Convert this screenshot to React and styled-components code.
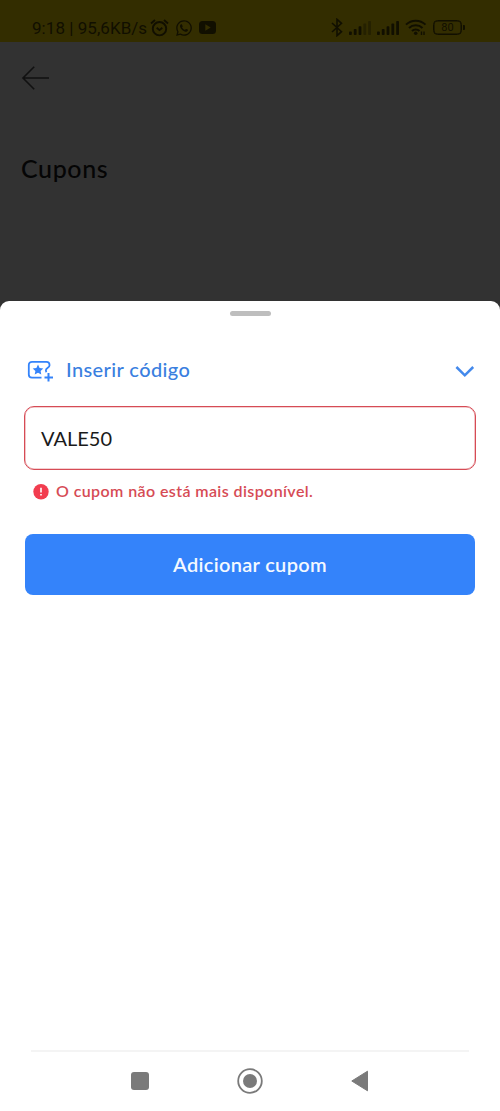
import React from "react";
import styled, { createGlobalStyle } from "styled-components";
import { FaWhatsapp } from "react-icons/fa";

const Colors = {
  statusBar: "#332d00",
  statusInk: "#110f00",
  backdrop:  "#323232",
  blue:      "#3483fa",
  link:      "#3a7fdf",
  red:       "#d64b55",
  alert:     "#f23d4f",
  nav:       "#7a7a7a",
};

const GlobalStyle = createGlobalStyle`
  * { box-sizing: border-box; }
  body {
    margin: 0;
    background: #fff;
    font-family: Lato, "Liberation Sans", sans-serif;
  }
`;

const Screen = styled.div`
  display:        flex;
  flex-direction: column;
  height:         1111px;
  background:     ${Colors.backdrop};
  overflow:       hidden;
`;

const StatusBar = styled.div`
  display:         flex;
  justify-content: space-between;
  height:          42px;
  padding:         13px 35px 0 32px;
  background:      ${Colors.statusBar};
  color:           ${Colors.statusInk};
`;

const StatusGroup = styled.div`
  display:     flex;
  align-items: center;
  height:      29px;
  gap:         ${props => props.$gap};
`;

const StatusText = styled.span`
  width:          112px;
  font-family:    Roboto, sans-serif;
  font-size:      17px;
  letter-spacing: 0.05px;
  white-space:    nowrap;
`;

const Header = styled.header`
  flex:    none;
  height:  259px;
  padding: 24px 21px 0;
  svg { display: block; }
`;

const Title = styled.h1`
  margin:         63px 0 0;
  font-size:      25px;
  line-height:    30px;
  font-weight:    500;
  letter-spacing: 0.6px;
  color:          #050505;
`;

const Sheet = styled.main`
  flex:           1;
  display:        flex;
  flex-direction: column;
  background:     #fff;
  border-radius:  9px 9px 0 0;
`;

const Handle = styled.div`
  width:         41px;
  height:        5px;
  margin:        10px auto 0;
  border-radius: 3px;
  background:    #bebebe;
`;

const SectionToggle = styled.div`
  display:     flex;
  align-items: center;
  height:      32px;
  margin:      39px 25px 0 27px;
  color:       ${Colors.link};
`;

const SectionLabel = styled.span`
  flex:           1;
  margin-left:    12px;
  padding-bottom: 4px;
  font-size:      20px;
  font-weight:    500;
  line-height:    28px;
  letter-spacing: 0.4px;
`;

const CodeField = styled.div`
  display:       flex;
  align-items:   center;
  height:        64px;
  margin:        19px 24px 0;
  padding:       0 16px;
  border:        1px solid ${Colors.red};
  border-radius: 10px;
  box-shadow:    inset 0 0 0 0.6px ${Colors.red}88;
  font-size:     20px;
  color:         #1a1a1a;
`;

const ErrorLine = styled.div`
  display:        flex;
  align-items:    center;
  gap:            7px;
  height:         20px;
  margin:         12px 33px 0;
  font-size:      16px;
  font-weight:    600;
  letter-spacing: 0.4px;
  white-space:    nowrap;
  color:          ${Colors.red};
  span { padding-bottom: 3px; }
`;

const SubmitButton = styled.button`
  flex:           none;
  height:         61px;
  margin:         32px 25px 0;
  padding:        0 0 2px;
  border:         0;
  border-radius:  8px;
  background:     ${Colors.blue};
  color:          #f4f9ff;
  font-family:    inherit;
  font-size:      20px;
  font-weight:    600;
  letter-spacing: 0.32px;
`;

const NavBar = styled.nav`
  display:         flex;
  justify-content: space-between;
  align-items:     center;
  height:          61px;
  margin:          auto 31px 0;
  padding:         0 99px 2px;
  border-top:      2px solid #f4f4f4;
  color:           ${Colors.nav};
`;

const AlarmIcon = () =>
  <svg width="19" height="18" viewBox="0 0 19 18" fill="none" stroke="currentColor" strokeWidth="1.9">
    <circle cx="9.5" cy="9.7" r="6.7" />
    <path d="M1 4.5 5 1M18 4.5 14 1M6.7 8.7l2.8 2.4 2.8-2.4" />
  </svg>

const YoutubeIcon = () =>
  <svg width="17" height="13" viewBox="0 0 17 13">
    <rect width="17" height="13" rx="3.5" fill="currentColor" />
    <path d="M6.3 3.3v6.4l5.4-3.2z" fill={Colors.statusBar} />
  </svg>

const BluetoothIcon = () =>
  <svg width="12" height="19" viewBox="0 0 12 19" fill="none" stroke="currentColor" strokeWidth="1.6">
    <path d="M1 5l9.5 8.7L6 17.7V1.3l4.5 4L1 14" />
  </svg>

const bars = [
  { x: 0,    h: 3.5 },
  { x: 4.8,  h: 6 },
  { x: 9.6,  h: 8.7 },
  { x: 14.4, h: 11.4 },
  { x: 19.2, h: 14 },
];

const SignalIcon = ({ level }) =>
  <svg width="22" height="14" viewBox="0 0 22 14" fill="currentColor">
    { bars.map((b, i) =>
        <rect key={b.x} x={b.x} y={14 - b.h} width="2.8" height={b.h} rx="0.8" opacity={i < level ? 1 : 0.4} />)
    }
  </svg>

const WifiIcon = () =>
  <svg width="22" height="17" viewBox="0 0 22 17" fill="none" stroke="currentColor" strokeWidth="2">
    <path d="M1 5.6a14 14 0 0 1 19.5 0M4 9a9.6 9.6 0 0 1 13.5 0M7 12a5.3 5.3 0 0 1 7.5 0" />
    <circle cx="10.7" cy="14.2" r="1.8" fill="currentColor" stroke="none" />
    <path d="M16.5 12.5v3.5M19 12.5v3.5" strokeWidth="1.4" />
  </svg>

const Battery = styled.div`
  display:     flex;
  align-items: center;
  &::after {
    content:       "";
    width:         2px;
    height:        5px;
    margin-left:   1px;
    border-radius: 0 1px 1px 0;
    background:    ${Colors.statusInk};
  }
`;

const BatteryBody = styled.span`
  width:         29px;
  height:        15px;
  border:        1px solid ${Colors.statusInk};
  border-radius: 4.5px;
  box-shadow:    inset 0 0 0 0.5px ${Colors.statusInk};
  font:          400 11px/13px Roboto, sans-serif;
  text-align:    center;
`;

const BackIcon = () =>
  <svg width="29" height="24" viewBox="0 0 29 24" fill="none" stroke="#111" strokeWidth="1.6">
    <path d="M28 12H2M13.2 .7 2 12l11.2 11.3" />
  </svg>

const CouponIcon = () =>
  <svg width="27" height="22" viewBox="0 0 27 22" fill="none" stroke={Colors.blue} strokeWidth="1.8">
    <path d="M14.5 17.7H5a3.2 3.2 0 0 1-3.2-3.2V5A3.2 3.2 0 0 1 5 1.8h14.5a3 3 0 0 1 3 3v.6c0 2.3-3.6 2.2-3.6 4.8 0 1 .2 1.4.6 1.9" />
    <path d="M11 4.5l1.6 3.4 3.7.5-2.7 2.5.7 3.7-3.3-1.8-3.3 1.8.7-3.7-2.7-2.5 3.7-.5z" fill={Colors.blue} stroke="none" />
    <path d="M21.5 13v8.500M17.500 17.500h8.500" strokeWidth="2" />
  </svg>

const ChevronIcon = () =>
  <svg width="20" height="14" viewBox="0 0 20 14" fill="none" stroke="#4389ec" strokeWidth="2.5">
    <path d="M1.4 3 9.8 11.3 18.2 3" />
  </svg>

const AlertIcon = () =>
  <svg width="16" height="16" viewBox="0 0 16 16">
    <circle cx="8" cy="7.7" r="7.7" fill={Colors.alert} />
    <path d="M8 3.8v4.7M8 10v1.6" stroke="#fff" strokeWidth="1.6" />
  </svg>

const App = () =>
  <Screen>
    <GlobalStyle />
    <StatusBar>
      <StatusGroup $gap="6px">
        <StatusText>9:18 | 95,6KB/s</StatusText>
        <AlarmIcon />
        <FaWhatsapp size={18} />
        <YoutubeIcon />
      </StatusGroup>
      <StatusGroup $gap="6px">
        <BluetoothIcon />
        <SignalIcon level={3} />
        <SignalIcon level={5} />
        <WifiIcon />
        <Battery><BatteryBody>80</BatteryBody></Battery>
      </StatusGroup>
    </StatusBar>
    <Header>
      <BackIcon />
      <Title>Cupons</Title>
    </Header>
    <Sheet>
      <Handle />
      <SectionToggle>
        <CouponIcon />
        <SectionLabel>Inserir código</SectionLabel>
        <ChevronIcon />
      </SectionToggle>
      <CodeField>VALE50</CodeField>
      <ErrorLine>
        <AlertIcon />
        <span>O cupom não está mais disponível.</span>
      </ErrorLine>
      <SubmitButton>Adicionar cupom</SubmitButton>
      <NavBar>
        <svg width="20" height="20" viewBox="0 0 20 20" fill="currentColor">
          <rect x="1" y="1" width="18" height="18" rx="3" />
        </svg>
        <svg width="26" height="26" viewBox="0 0 26 26" fill="currentColor">
          <circle cx="13" cy="13" r="11.8" fill="none" stroke="currentColor" strokeWidth="1.8" />
          <circle cx="13" cy="13" r="7" />
        </svg>
        <svg width="20" height="22" viewBox="0 0 20 22" fill="currentColor" stroke="currentColor" strokeLinejoin="round">
          <path d="M1.8 11 17.5 1.2v19.6z" />
        </svg>
      </NavBar>
    </Sheet>
  </Screen>

export default App;
